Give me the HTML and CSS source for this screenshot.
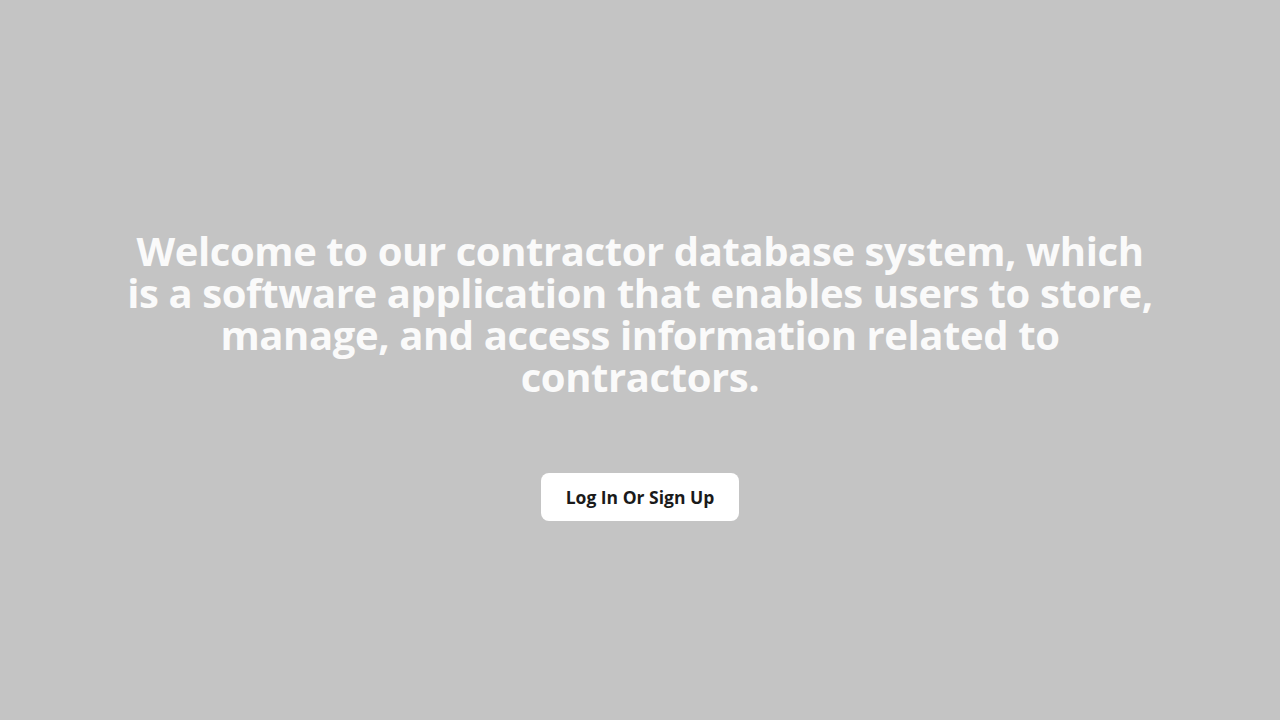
FILE: index.html
```html
<!DOCTYPE html>
<html lang="en">
<head>
<meta charset="utf-8">
<title>Contractor Database</title>
<link rel="stylesheet" href="styles.css">
</head>
<body>
<main class="hero">
  <h1 class="hero-title">Welcome to our contractor database system, which is a software application that enables users to store, manage, and access information related to contractors.</h1>
  <button class="hero-btn" type="button">Log In Or Sign Up</button>
</main>
</body>
</html>
```
FILE: styles.css
```css
html, body {
  margin: 0;
  padding: 0;
  height: 100%;
}
body {
  background: #c4c4c4;
  font-family: "Open Sans", "Noto Sans", sans-serif;
}
.hero {
  min-height: 100vh;
  box-sizing: border-box;
  display: flex;
  flex-direction: column;
  align-items: center;
  justify-content: center;
  padding: 30px 120px 0;
  gap: 75px;
}
.hero-title {
  margin: 0;
  color: #fafafa;
  font-size: 40px;
  font-weight: 700;
  line-height: 42px;
  text-align: center;
  letter-spacing: -0.4px;
}
.hero-btn {
  width: 198px;
  height: 48px;
  border: none;
  border-radius: 8px;
  background: #ffffff;
  color: #1a1a1a;
  font-family: "Open Sans", "Noto Sans", sans-serif;
  font-size: 17.5px;
  font-weight: 700;
  cursor: pointer;
}
```
